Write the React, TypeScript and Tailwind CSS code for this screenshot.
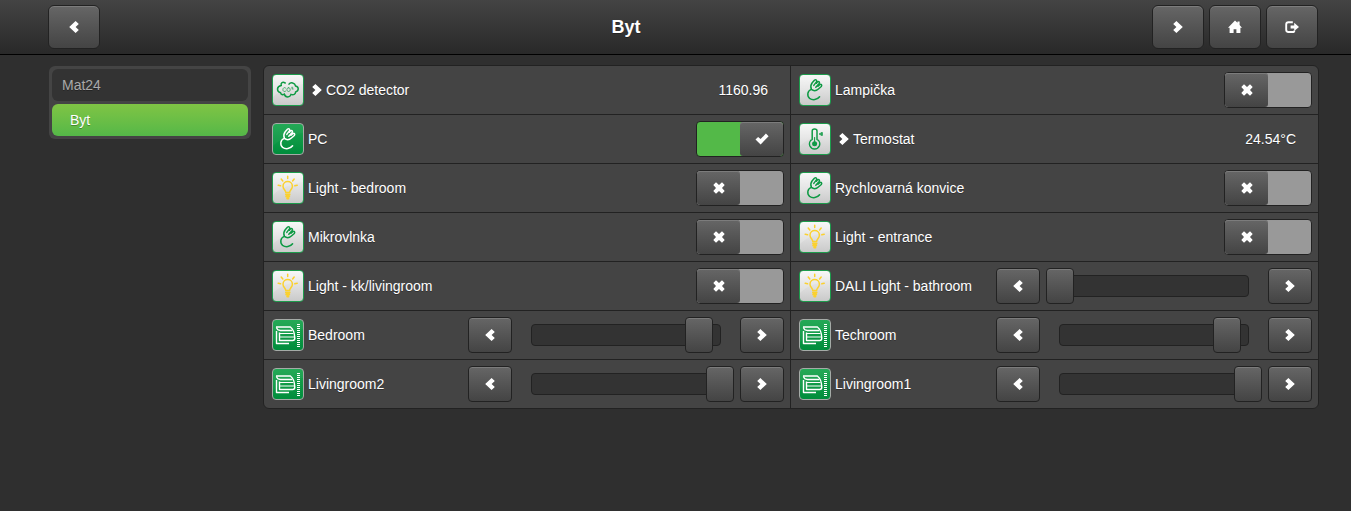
import { useState } from "react";
import type { ReactNode } from "react";

type DeviceIcon = "co2" | "plug" | "plugOn" | "thermo" | "bulb" | "blind";

type Device = {
  name: string;
  icon: DeviceIcon;
  kind: "value" | "switch" | "slider";
  text?: string;
  on?: boolean;
  level?: number;
};

const devices: Device[] = [
  { name: "CO2 detector", icon: "co2", kind: "value", text: "1160.96" },
  { name: "Lampička", icon: "plug", kind: "switch" },
  { name: "PC", icon: "plugOn", kind: "switch", on: true },
  { name: "Termostat", icon: "thermo", kind: "value", text: "24.54°C" },
  { name: "Light - bedroom", icon: "bulb", kind: "switch" },
  { name: "Rychlovarná konvice", icon: "plug", kind: "switch" },
  { name: "Mikrovlnka", icon: "plug", kind: "switch" },
  { name: "Light - entrance", icon: "bulb", kind: "switch" },
  { name: "Light - kk/livingroom", icon: "bulb", kind: "switch" },
  { name: "DALI Light - bathroom", icon: "bulb", kind: "slider", level: 0 },
  { name: "Bedroom", icon: "blind", kind: "slider", level: 89 },
  { name: "Techroom", icon: "blind", kind: "slider", level: 89 },
  { name: "Livingroom2", icon: "blind", kind: "slider", level: 100 },
  { name: "Livingroom1", icon: "blind", kind: "slider", level: 100 },
];

const raised =
  "border border-[#222] bg-linear-to-b from-[#666] to-[#444] shadow-[inset_0_1px_0_#7c7c7c]";

const glyphs = {
  left: "M8.6 1 L11.8 4.1 L8.6 7 L11.8 9.9 L8.6 13 L2.2 7 Z",
  right: "M5.4 1 L2.2 4.1 L5.4 7 L2.2 9.9 L5.4 13 L11.8 7 Z",
  cross:
    "M4 1.3 L7 4 L10 1.3 L12.7 4 L10 7 L12.7 10 L10 12.7 L7 10 L4 12.7 L1.3 10 L4 7 L1.3 4 Z",
  check: "M10.9 1.6 L13.6 4.3 L5.6 12.4 L0.5 7.6 L3.1 4.9 L5.6 7.1 Z",
  home: "M7 0.4 L9.5 2.8 V1.4 H11.6 V4.9 L14 7.7 H12.4 V13 H8.4 V9.2 H5.6 V13 H1.6 V7.7 H0 Z",
};

function Glyph({ name }: { name: keyof typeof glyphs }) {
  return (
    <svg viewBox="0 0 14 14" className="size-3.5 shrink-0 fill-white" aria-hidden="true">
      <path d={glyphs[name]} />
    </svg>
  );
}

function ExitGlyph() {
  return (
    <svg viewBox="0 0 14 14" className="size-3.5 shrink-0" aria-hidden="true">
      <path
        d="M7.8 2.2 H3.4 Q1.2 2.2 1.2 4.4 V9.8 Q1.2 12 3.4 12 H7.4 Q9.4 12 9.4 10.4"
        fill="none"
        stroke="#fff"
        strokeWidth="1.9"
      />
      <path d="M9.2 2.8 L14 7 L9.2 11 V8.5 H5.6 V5.4 H9.2 Z" fill="#fff" />
    </svg>
  );
}

function Drawing({ icon }: { icon: DeviceIcon }) {
  if (icon === "co2") {
    return (
      <g fill="none" stroke="#0f9a44" strokeWidth="1.5" strokeLinecap="round">
        <path d="M13.2 9 C10.6 7.4 8.6 8.8 9.2 11.4 C4.6 12.2 4.2 17.4 8.6 18.8 C9 20.6 10.6 21.2 12.4 20.2 C13.4 23.8 18 23.8 19 20.4 C21.6 21.2 23.6 20.2 23.6 18 C27.2 16.8 27 12.8 23.6 12 C22.8 8.8 18.6 7.8 17 10.2" />
        <path
          d="M13.6 14 C12.2 12.9 10.9 14 10.9 15.6 C10.9 17.2 12.2 18.2 13.6 17.2 M16.6 13.7 C15.4 13.7 14.9 14.6 14.9 15.6 C14.9 16.7 15.5 17.5 16.6 17.5 C17.7 17.5 18.2 16.7 18.2 15.6 C18.2 14.6 17.7 13.7 16.6 13.7 M19.6 13.2 C20.6 12.4 21.2 13.4 19.8 15 H21.2"
          strokeWidth="0.7"
        />
      </g>
    );
  }
  if (icon === "plug" || icon === "plugOn") {
    return (
      <g
        fill="none"
        stroke={icon === "plug" ? "#0f9a44" : "#fff"}
        strokeWidth="1.5"
        strokeLinecap="round"
        strokeLinejoin="round"
      >
        <path d="M12.4 15.4 C11.4 13 11.8 10.6 13.2 8.8 L15.4 6.2 C16.8 5 18.4 6.4 17.4 7.9 L14.8 11.4 M17.4 9.2 L18.6 7.8 C19.8 7 21 8.2 20.2 9.4 L16.8 13.2 M19 12.2 L20.8 10.6 C22.2 9.8 23.3 11.3 22.3 12.5 L19.4 15 C17.4 16.8 14.4 17 12.4 15.4" />
        <path d="M12.4 15.4 C8.2 16.6 7.8 22 10.6 24.3 C13.6 26.6 18.4 25.8 20.6 22.8" />
      </g>
    );
  }
  if (icon === "thermo") {
    return (
      <g fill="none" stroke="#0f9a44" strokeWidth="1.5" strokeLinecap="round">
        <path d="M13.2 16.4 V8 C13.2 5.2 18 5.2 18 8 V16.4 C20.4 17.6 21.3 20.4 20.4 22.7 C18.6 27 12.6 27 10.8 22.7 C9.9 20.4 10.8 17.6 13.2 16.4 Z" />
        <path d="M15.6 14.5 V19" strokeWidth="1" />
        <circle cx="15.6" cy="20.8" r="2.5" fill="#0f9a44" stroke="none" />
        <path d="M22.4 9.8 L20.2 11 L22.4 12.2 Z M23.2 9.6 V12.4" strokeWidth="1" />
      </g>
    );
  }
  if (icon === "bulb") {
    return (
      <g fill="none" stroke="#fbd12f" strokeWidth="1.5" strokeLinecap="round">
        <path d="M13.8 20.4 C13.6 18 11 17.2 11 14.2 C11 8 20.4 8 20.4 14.2 C20.4 17.2 17.8 18 17.6 20.4 Z" />
        <path d="M14 22.5 H17.6 M14.2 24.4 H17.2 M15.2 26.4 H16.4" strokeWidth="2" />
        <path d="M15.7 4.2 V6.6 M9.2 7 L10.8 9 M22.2 7 L20.6 9 M6.2 13.3 L8.6 13.8 M25.2 13.3 L22.8 13.8" />
      </g>
    );
  }
  return (
    <g fill="none" stroke="#fff" strokeWidth="1.4" strokeLinejoin="round">
      <path d="M4 8 H18.4 C20.8 9.8 22.6 14.6 22.8 19 C22.8 20.4 22 21.5 20.6 21.5 H7.5 V13.4" />
      <path d="M4.4 8.4 C5 10.6 6.6 11.5 8.4 11.5 H20.2" strokeWidth="1.3" />
      <path d="M8 14.5 H21.4 M8 18 H22.4" strokeWidth="1.2" />
      <path d="M4.5 12 V24.5 H17" />
      <path d="M26.5 5 V28" strokeWidth="3" strokeDasharray="1 1" />
    </g>
  );
}

function DeviceTile({ icon }: { icon: DeviceIcon }) {
  const active = icon === "plugOn" || icon === "blind";
  const tone = active
    ? "border-[#a5aba7] from-[#1ba650] to-[#008d3c]"
    : "border-[#1d9c4c] from-[#f6f6f6] to-[#cacaca]";
  return (
    <span className={`size-8 shrink-0 overflow-hidden rounded-sm border bg-linear-to-b ${tone}`}>
      <svg viewBox="1 1 30 30" className="size-full" aria-hidden="true">
        <path d="M1 1 H31 V10 C20 12 8 16 1 23 Z" fill="#fff" fillOpacity={active ? 0.04 : 0.18} />
        <Drawing icon={icon} />
      </svg>
    </span>
  );
}

function NavButton({ label, children }: { label: string; children: ReactNode }) {
  return (
    <button
      type="button"
      aria-label={label}
      className={`flex h-11 w-13 items-center justify-center rounded-md ${raised}`}
    >
      {children}
    </button>
  );
}

function StepButton({ label, glyph, onClick }: { label: string; glyph: "left" | "right"; onClick: () => void }) {
  return (
    <button
      type="button"
      aria-label={label}
      onClick={onClick}
      className={`flex h-9 w-11 shrink-0 items-center justify-center rounded-sm ${raised}`}
    >
      <Glyph name={glyph} />
    </button>
  );
}

function Toggle({ id, initial }: { id: string; initial: boolean }) {
  const [on, setOn] = useState(initial);
  return (
    <label
      htmlFor={id}
      className={`relative flex h-9 w-22 shrink-0 cursor-pointer overflow-hidden rounded-sm border border-[#222] ${
        on ? "justify-end bg-[#53b948]" : "bg-[#999]"
      }`}
    >
      <input
        id={id}
        type="checkbox"
        role="switch"
        checked={on}
        onChange={(e) => setOn(e.target.checked)}
        className="sr-only"
      />
      <span className="flex w-1/2 items-center justify-center rounded-[3px] bg-linear-to-b from-[#666] to-[#444] shadow-[inset_0_1px_0_#7c7c7c]">
        <Glyph name={on ? "check" : "cross"} />
      </span>
    </label>
  );
}

function LevelSlider({ id, initial }: { id: string; initial: number }) {
  const [level, setLevel] = useState(initial);
  const step = (by: number) => setLevel((v) => Math.min(100, Math.max(0, v + by)));
  return (
    <div className="flex items-center gap-1.5">
      <StepButton label="Decrease" glyph="left" onClick={() => step(-1)} />
      <div className="grid w-54 items-center">
        <span className="col-start-1 row-start-1 mx-[13px] h-[22px] rounded-sm border border-[#222] bg-[#333]" />
        <input
          id={id}
          type="range"
          min={0}
          max={100}
          value={level}
          onChange={(e) => setLevel(Number(e.target.value))}
          className="col-start-1 row-start-1 h-9 w-full cursor-pointer appearance-none bg-transparent [&::-webkit-slider-thumb]:h-9 [&::-webkit-slider-thumb]:w-7 [&::-webkit-slider-thumb]:appearance-none [&::-webkit-slider-thumb]:rounded-sm [&::-webkit-slider-thumb]:border [&::-webkit-slider-thumb]:border-[#222] [&::-webkit-slider-thumb]:bg-linear-to-b [&::-webkit-slider-thumb]:from-[#666] [&::-webkit-slider-thumb]:to-[#444] [&::-webkit-slider-thumb]:shadow-[inset_0_1px_0_#7c7c7c]"
        />
      </div>
      <StepButton label="Increase" glyph="right" onClick={() => step(1)} />
    </div>
  );
}

function DeviceRow({ device, index }: { device: Device; index: number }) {
  const id = `device-${index}`;
  const lastRow = index >= devices.length - 2;
  const edges = `${index % 2 === 0 ? "border-r" : ""} ${lastRow ? "" : "border-b"}`;
  return (
    <li className={`border-[#222] ${edges}`}>
      <div className="flex h-12 items-center justify-between pr-1.5 pl-2">
        <div className="flex items-center gap-1">
          <DeviceTile icon={device.icon} />
          {device.kind === "value" ? (
            <a href="#detail" className="flex items-center gap-0.5 pl-0.5">
              <Glyph name="right" />
              {device.name}
            </a>
          ) : (
            <label htmlFor={id}>{device.name}</label>
          )}
        </div>
        {device.kind === "value" && <span className="pr-4">{device.text}</span>}
        {device.kind === "switch" && <Toggle id={id} initial={device.on ?? false} />}
        {device.kind === "slider" && <LevelSlider id={id} initial={device.level ?? 0} />}
      </div>
    </li>
  );
}

export default function App() {
  return (
    <div className="min-h-screen bg-[#2f2f2f] font-['Liberation_Sans',Arial,sans-serif] text-sm text-white [text-shadow:0_1px_0_rgba(0,0,0,0.3)]">
      <header className="flex items-start border-b border-black bg-linear-to-b from-[#444] to-[#292929] pt-[5px] pr-[33px] pb-[5px] pl-12">
        <NavButton label="Back">
          <Glyph name="left" />
        </NavButton>
        <h1 className="flex-1 self-center text-center text-lg font-bold">Byt</h1>
        <div className="flex gap-[5px]">
          <NavButton label="Next">
            <Glyph name="right" />
          </NavButton>
          <NavButton label="Home">
            <Glyph name="home" />
          </NavButton>
          <NavButton label="Log out">
            <ExitGlyph />
          </NavButton>
        </div>
      </header>
      <div className="flex items-start gap-3 pt-2.5 pr-8 pl-[49px]">
        <nav className="mt-px flex w-[202px] shrink-0 flex-col gap-[3px] rounded-md bg-[#444] p-[3px]">
          <a href="#mat24" className="flex h-8 items-center rounded-md bg-[#333] pl-2.5 text-[#aaa]">
            Mat24
          </a>
          <a
            href="#byt"
            aria-current="page"
            className="flex h-8 items-center rounded-md bg-linear-to-b from-[#7fc444] to-[#54b848] pl-[18px]"
          >
            Byt
          </a>
        </nav>
        <main className="flex-1">
          <ul className="grid grid-cols-2 overflow-hidden rounded-md border border-[#222] bg-[#444]">
            {devices.map((device, i) => (
              <DeviceRow key={device.name} device={device} index={i} />
            ))}
          </ul>
        </main>
      </div>
    </div>
  );
}
